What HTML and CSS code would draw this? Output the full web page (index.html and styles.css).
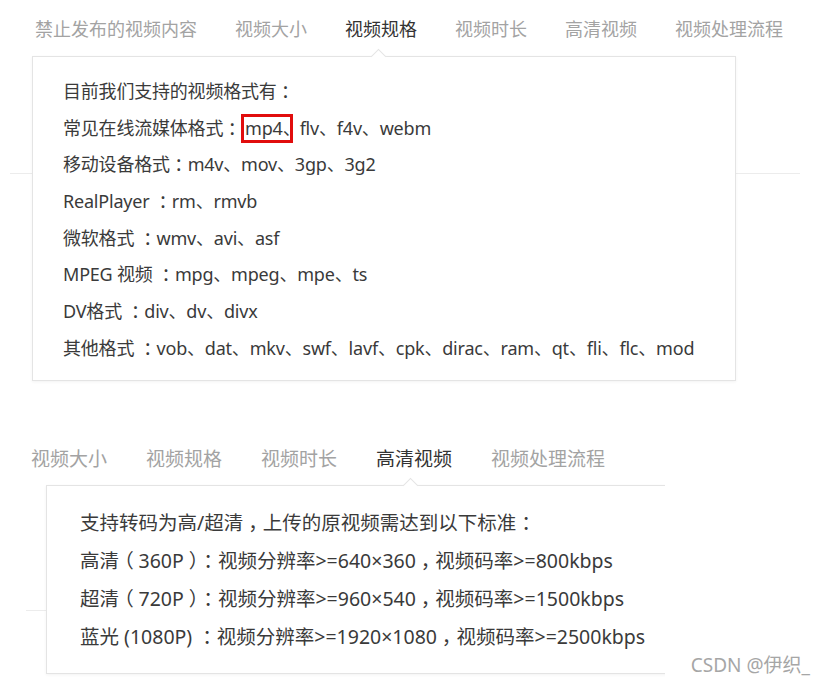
FILE: index.html
```html
<!DOCTYPE html>
<html lang="zh-CN">
<head>
<meta charset="utf-8">
<title>视频规格</title>
<link rel="stylesheet" href="styles.css">
</head>
<body>
<div class="shot shot1">
  <div class="tabs tabs1">
    <span class="tab">禁止发布的视频内容</span>
    <span class="tab">视频大小</span>
    <span class="tab active">视频规格</span>
    <span class="tab">视频时长</span>
    <span class="tab">高清视频</span>
    <span class="tab">视频处理流程</span>
  </div>
  <div class="pop pop1">
    <p>目前我们支持的视频格式有<span class="c">：</span></p>
    <p>常见在线流媒体格式<span class="c">：</span><span class="mark">mp4<span class="dun">、</span></span>flv、f4v、webm</p>
    <p>移动设备格式<span class="c">：</span>m4v、mov、3gp、3g2</p>
    <p>RealPlayer <span class="c">：</span>rm、rmvb</p>
    <p>微软格式 <span class="c">：</span>wmv、avi、asf</p>
    <p>MPEG 视频 <span class="c">：</span>mpg、mpeg、mpe、ts</p>
    <p>DV格式 <span class="c">：</span>div、dv、divx</p>
    <p>其他格式 <span class="c">：</span>vob、dat、mkv、swf、lavf、cpk、dirac、ram、qt、fli、flc、mod</p>
  </div>
</div>
<div class="shot shot2">
  <div class="tabs tabs2">
    <span class="tab">视频大小</span>
    <span class="tab">视频规格</span>
    <span class="tab">视频时长</span>
    <span class="tab active">高清视频</span>
    <span class="tab">视频处理流程</span>
  </div>
  <div class="pop pop2">
    <p>支持转码为高/超清<span class="c">，</span>上传的原视频需达到以下标准<span class="c">：</span></p>
    <p>高清<span class="c">（</span>360P<span class="c close">）</span><span class="c">：</span>视频分辨率&gt;=640×360<span class="c">，</span>视频码率&gt;=800kbps</p>
    <p>超清<span class="c">（</span>720P<span class="c close">）</span><span class="c">：</span>视频分辨率&gt;=960×540<span class="c">，</span>视频码率&gt;=1500kbps</p>
    <p>蓝光 (1080P) <span class="c">：</span>视频分辨率&gt;=1920×1080<span class="c">，</span>视频码率&gt;=2500kbps</p>
  </div>
</div>
<div class="watermark">CSDN @伊织_</div>
</body>
</html>
```
FILE: styles.css
```css
html, body {
  margin: 0;
  padding: 0;
  background: #fff;
}
body {
  position: relative;
  width: 826px;
  height: 690px;
  overflow: hidden;
  font-family: "Noto Sans CJK SC", "Noto Sans", sans-serif;
  color: #3a3a3a;
}
p {
  margin: 0;
  white-space: nowrap;
  font-family: "Noto Sans", "Noto Sans CJK SC", sans-serif;
}
/* full-width punctuation centred in its cell: half-width glyph + equal padding */
.c {
  font-feature-settings: "halt" 1;
  padding: 0 0.25em;
}
.c.close {
  padding-right: 0;
}
.shot {
  position: relative;
}
.tabs {
  display: flex;
  align-items: center;
  height: 56px;
  color: #a3a3a3;
}
.tab.active {
  color: #333;
}
.tabs1 {
  font-size: 18px;
  gap: 38px;
  padding-left: 35px;
}
.shot1::before {
  content: "";
  position: absolute;
  left: 10px;
  top: 173px;
  width: 790px;
  border-top: 1px solid #ececec;
}
.pop {
  position: relative;
  z-index: 1;
  background: #fff;
  border: 1px solid #e4e4e4;
  box-shadow: 0 1px 3px rgba(0, 0, 0, 0.05);
}
.pop::after {
  content: "";
  position: absolute;
  top: -6px;
  width: 10px;
  height: 10px;
  background: #fff;
  border-left: 1px solid #e4e4e4;
  border-top: 1px solid #e4e4e4;
  transform: rotate(45deg);
}
.pop1 {
  margin-left: 32px;
  width: 702px;
  height: 323px;
}
.pop1::after {
  left: 340px;
}
.pop1 p {
  font-size: 18px;
  height: 36.7px;
  line-height: 36.7px;
  padding-left: 30px;
  letter-spacing: -0.2px;
}
.pop1 p:first-child {
  margin-top: 16px;
}
.mark {
  display: inline-block;
  border: 3px solid #e10d0d;
  line-height: 23px;
  padding: 0 0 0 1px;
  margin-right: 7px;
}
.dun {
  font-feature-settings: "halt" 1;
  letter-spacing: -2px;
}
.shot2 {
  margin-top: 48px;
  width: 665px;
  height: 250px;
  overflow: hidden;
}
.shot2::before {
  content: "";
  position: absolute;
  left: 26px;
  top: 181px;
  width: 40px;
  border-top: 1px solid #ececec;
}
.tabs2 {
  font-size: 19px;
  gap: 39px;
  padding-left: 31px;
}
.pop2 {
  margin-left: 46px;
  width: 660px;
  height: 189px;
  box-sizing: border-box;
  border-right: none;
}
.pop2::after {
  left: 358px;
}
.pop2 p {
  font-size: 19.5px;
  height: 38px;
  line-height: 38px;
  padding-left: 33px;
}
.pop2 p:first-child {
  margin-top: 18px;
}
.watermark {
  position: absolute;
  right: 16px;
  bottom: 13px;
  font-family: "Noto Sans", "Noto Sans CJK SC", sans-serif;
  font-size: 19px;
  line-height: 24px;
  color: #a6a6a6;
}
```
